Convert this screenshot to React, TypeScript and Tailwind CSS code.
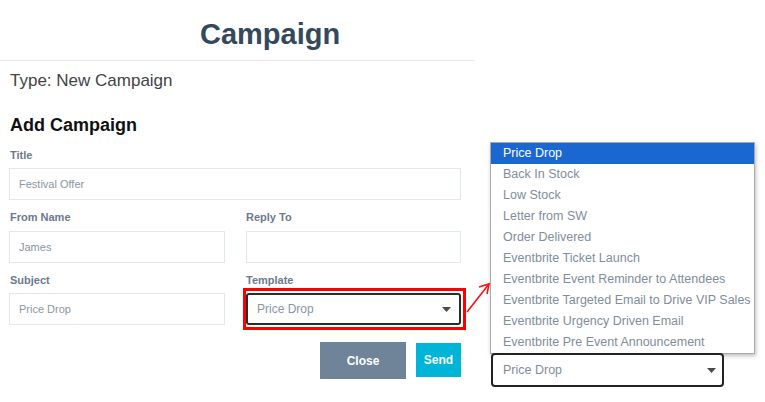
import React from 'react';

const templates = [
  'Price Drop',
  'Back In Stock',
  'Low Stock',
  'Letter from SW',
  'Order Delivered',
  'Eventbrite Ticket Launch',
  'Eventbrite Event Reminder to Attendees',
  'Eventbrite Targeted Email to Drive VIP Sales',
  'Eventbrite Urgency Driven Email',
  'Eventbrite Pre Event Announcement',
];

function Label({ children }: { children: React.ReactNode }) {
  return <div className="text-[11px] leading-[14px] font-bold text-[#6b7a8c]">{children}</div>;
}

function Field({ value }: { value?: string }) {
  return (
    <div className="h-[32px] border border-[#dfe7ef] flex items-center pl-[9px] text-[11px] text-[#8a96a3]">
      {value}
    </div>
  );
}

function Caret() {
  return (
    <svg width="9" height="5" viewBox="0 0 9 5">
      <path d="M0 0h9L4.5 5z" fill="#4a4a4a" />
    </svg>
  );
}

export default function App() {
  return (
    <div
      className="relative w-[765px] h-[402px] bg-white overflow-hidden"
      style={{ fontFamily: '"Liberation Sans", Arial, sans-serif' }}
    >
      <div className="w-[475px]">
        <div className="h-[61px] border-b border-[#e6e6e6] flex items-end pb-[9px] pl-[200px]">
          <h1 className="text-[29px] leading-[34px] font-bold text-[#34495e]">Campaign</h1>
        </div>

        <div className="px-[9px]">
          <div className="mt-[10px] text-[17px] leading-[20px] text-[#444] pl-[1px]">Type: New Campaign</div>
          <div className="mt-[23px] text-[18px] leading-[22px] font-bold text-[#111] pl-[1px]">Add Campaign</div>

          <div className="mt-[12px] pl-[1px]"><Label>Title</Label></div>
          <div className="mt-[6px] w-[452px]"><Field value="Festival Offer" /></div>

          <div className="grid grid-cols-[216px_215px] gap-x-[21px]">
            <div className="mt-[10px] pl-[1px]"><Label>From Name</Label></div>
            <div className="mt-[10px]"><Label>Reply To</Label></div>
            <div className="mt-[7px]"><Field value="James" /></div>
            <div className="mt-[7px]"><Field /></div>

            <div className="mt-[10px] pl-[1px]"><Label>Subject</Label></div>
            <div className="mt-[10px]"><Label>Template</Label></div>
            <div className="mt-[6px]"><Field value="Price Drop" /></div>
            <div className="mt-[6px] relative">
              <div className="h-[32px] border-2 border-[#2b2b2b] rounded-[3px] flex items-center justify-between pl-[9px] pr-[8px] text-[12px] text-[#8795a6]">
                <span>Price Drop</span>
                <Caret />
              </div>
              <div className="absolute left-[-3px] top-[-5px] w-[223px] h-[42px] border-[3px] border-[#ff0000]" />
            </div>
          </div>

          <div className="mt-[17px] w-[452px] flex justify-end items-start gap-[10px]">
            <button className="w-[86px] h-[37px] bg-[#6f8498] text-white text-[12px] font-bold">Close</button>
            <button className="mt-[1px] w-[45px] h-[34px] bg-[#00b5d7] text-white text-[12px] font-bold">Send</button>
          </div>
        </div>
      </div>

      <svg className="absolute left-[462px] top-[278px]" width="32" height="40" viewBox="0 0 32 40">
        <path d="M5 34 L27 6" stroke="#ff1010" strokeWidth="1.6" fill="none" />
        <path d="M17 9 L27 6 L25 16" stroke="#ff1010" strokeWidth="1.6" fill="none" />
      </svg>

      <div className="absolute left-[490px] top-[142px] w-[265px] border border-[#a9a9a9] bg-white shadow-[1px_2px_4px_rgba(0,0,0,0.25)]">
        {templates.map((t, i) => (
          <div
            key={t}
            className={
              i === 0
                ? 'h-[21px] leading-[21px] pl-[12px] text-[12.5px] bg-[#1b67d2] text-white'
                : 'h-[21px] leading-[21px] pl-[12px] text-[12.5px] text-[#7f8d9d] whitespace-nowrap'
            }
          >
            {t}
          </div>
        ))}
      </div>

      <div className="absolute left-[491px] top-[353px] w-[233px] h-[34px] border-2 border-[#222] rounded-[4px] bg-white flex items-center justify-between pl-[10px] pr-[6px] text-[12.5px] text-[#7f8d9d]">
        <span>Price Drop</span>
        <Caret />
      </div>
    </div>
  );
}
